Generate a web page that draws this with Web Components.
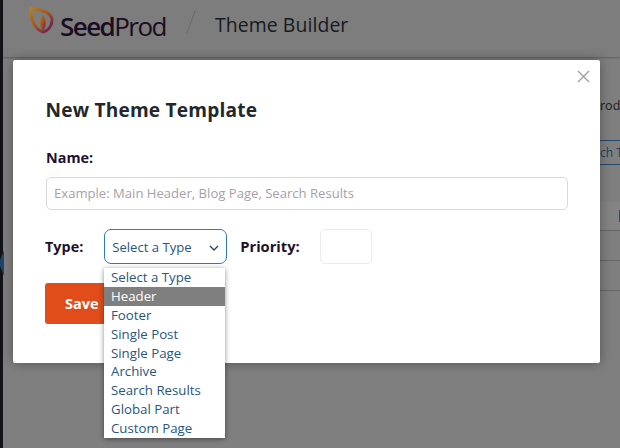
<!DOCTYPE html>
<html><head><meta charset="utf-8"><style>
html,body{margin:0;padding:0;width:620px;height:448px;overflow:hidden;background:#7f7f7f;font-family:"Open Sans",sans-serif}
</style></head><body>
<back-page></back-page>
<new-template-modal></new-template-modal>
<script>
class BackPage extends HTMLElement{constructor(){super();this.attachShadow({mode:'open'}).innerHTML=`<style>
:host{display:flex;width:620px;height:448px;position:relative;overflow:hidden;background:#7f7f7f;color:#1a0d20}
.side{width:3px;background:#121417;flex:none}
.main{flex:1;display:flex;flex-direction:column;min-width:0}
.head{height:57px;flex:none;display:flex;align-items:center;padding-left:25px;background:#7d7d7d;box-shadow:0 1px 2px rgba(0,0,0,.25)}
.logo{width:26px;height:28px;margin-right:6px;margin-top:-17px}
.brand{font:400 26px "Open Sans",sans-serif;letter-spacing:-1.55px;color:#1b0c22;margin-top:-5px}
.brand b{font-weight:600}
.slash{width:12px;height:24px;margin:-14px 17px 0 20px}
.title{font:500 19.4px "Open Sans",sans-serif;color:#161a22;letter-spacing:.1px;margin-top:-9px}
.right{position:absolute;left:600px;top:0;width:20px;height:448px}
.rod{position:absolute;left:0;top:97px;font:400 12.5px "Open Sans",sans-serif;color:#1c1c1c}
.btn{position:absolute;left:0;top:140px;width:20px;height:23px;border-top:1px solid #244a6d;border-bottom:1px solid #244a6d;font:400 12px/23px "Open Sans",sans-serif;color:#1d3f60;white-space:nowrap}
.th{position:absolute;left:0;top:202px;width:20px;height:28px;background:#838383;border-bottom:1px solid #666}
.th i{position:absolute;left:19px;top:8px;width:2px;height:12px;background:#264a6c}
.ln{position:absolute;left:0;width:20px;height:1px;background:#666}
.tick{position:absolute;left:0;top:250px;width:4px;height:26px}
</style>
<div class="side"></div>
<div class="main"><div class="head">
<svg class="logo" viewBox="0 0 26 28"><defs><linearGradient id="g" x1="0" y1="0" x2="1" y2="1"><stop offset="0" stop-color="#b8801a"/><stop offset=".5" stop-color="#a8501c"/><stop offset="1" stop-color="#5d1c63"/></linearGradient></defs>
<path d="M2.5 2.5C3 12 6 23 15 26C20 25 24 20 24 14C24 8 17 4 2.5 2.5Z" fill="none" stroke="url(#g)" stroke-width="3" stroke-linejoin="round"/><path d="M15 25C11 20 11 14 15 9C18 13 19 20 15 25Z" fill="url(#g)"/></svg>
<span class="brand"><b>Seed</b>Prod</span>
<svg class="slash" viewBox="0 0 12 24"><path d="M9 1L1 23" stroke="#6a6a6a" stroke-width="1"/></svg>
<span class="title">Theme Builder</span>
</div></div>
<svg class="tick" viewBox="0 0 4 26"><path d="M4 0L0 10V16L4 26Z" fill="#20456a"/></svg>
<div class="right"><span class="rod">rod</span><div class="btn">ch T</div><div class="th"><i></i></div><div class="ln" style="top:260px"></div><div class="ln" style="top:290px"></div></div>`}}
customElements.define('back-page',BackPage);

class OptionList extends HTMLElement{constructor(){super();const items=['Select a Type','Header','Footer','Single Post','Single Page','Archive','Search Results','Global Part','Custom Page'];
this.attachShadow({mode:'open'}).innerHTML=`<style>
:host{position:absolute;left:91px;top:208px;width:121px;display:block;background:#fff;box-shadow:0 1px 5px rgba(0,0,0,.45)}
div{height:18.9px;padding-left:7px;font:400 13.25px/19px "Open Sans",sans-serif;color:#2a567c;white-space:nowrap}
.on{background:#7f7f7f;color:#fff}
</style>`+items.map(t=>`<div class="${t==='Header'?'on':''}">${t}</div>`).join('')}}
customElements.define('option-list',OptionList);

class TemplateModal extends HTMLElement{constructor(){super();this.attachShadow({mode:'open'}).innerHTML=`<style>
:host{position:absolute;left:13px;top:60px;width:587px;height:303px;display:block;box-sizing:border-box;background:#fff;border-radius:2px;box-shadow:0 0 12px rgba(0,0,0,.35);padding:37px 32px 0 33px;color:#23092f}
.close{position:absolute;right:10px;top:10px;width:13px;height:13px}
h2{margin:0 0 24px;font:700 19.1px/27px "Open Sans",sans-serif;color:#22282d;letter-spacing:.2px;margin-left:-.5px}
label{font:700 14.4px/19px "Open Sans",sans-serif;color:#23102c;display:block}
.name{margin-bottom:10px}
.input{box-sizing:border-box;height:33px;border:1px solid #d9d9dc;border-radius:5px;padding-left:7px;font:400 13.1px/30px "Open Sans",sans-serif;color:#a79fa9;background:#fff;margin-bottom:19px}
.row{display:flex;align-items:center;height:35px;margin-left:-1px}
.sel{box-sizing:border-box;width:123px;height:35px;margin-left:21px;border:1px solid #2f7cb5;border-radius:7px;display:flex;align-items:center;justify-content:space-between;padding:0 7px 0 7px;font:400 13.1px "Open Sans",sans-serif;color:#2a567c}
.sel svg{width:10px;height:6px;margin-top:2px}
.pri{margin-left:13px;font-size:14.7px}
.num{box-sizing:border-box;width:52px;height:35px;margin-left:20px;border:1px solid #ececee;border-radius:5px}
.save{box-sizing:border-box;margin:19px 0 0 -1px;width:80px;height:41px;border-radius:3px;background:#e14c1b;color:#fff;font:700 14.5px/41px "Open Sans",sans-serif;padding-left:20px}
</style>
<svg class="close" viewBox="0 0 13 13"><path d="M1 1L12 12M12 1L1 12" stroke="#a49fa6" stroke-width="1.4" fill="none"/></svg>
<h2>New Theme Template</h2>
<label class="name">Name:</label>
<div class="input">Example: Main Header, Blog Page, Search Results</div>
<div class="row"><label>Type:</label>
<div class="sel"><span>Select a Type</span><svg viewBox="0 0 10 6"><path d="M1 1L5 5L9 1" stroke="#33424f" stroke-width="1.3" fill="none"/></svg></div>
<label class="pri">Priority:</label><div class="num"></div></div>
<div class="save">Save</div>
<option-list></option-list>`}}
customElements.define('new-template-modal',TemplateModal);
</script>
</body></html>
